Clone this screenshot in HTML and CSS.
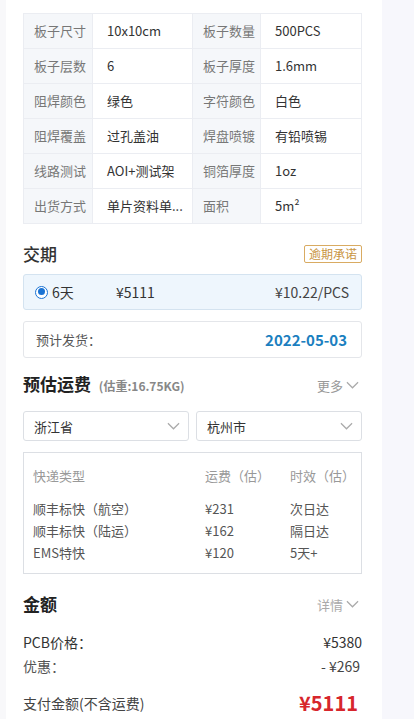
FILE: index.html
```html
<!DOCTYPE html>
<html lang="zh-CN">
<head>
<meta charset="utf-8">
<title>PCB 订单</title>
<link rel="stylesheet" href="styles.css">
</head>
<body>
<div class="page">
  <div class="strip"></div>
  <main class="panel">
    <table class="spec">
      <tr><td class="k">板子尺寸</td><td class="v">10x10cm</td><td class="k">板子数量</td><td class="v">500PCS</td></tr>
      <tr><td class="k">板子层数</td><td class="v">6</td><td class="k">板子厚度</td><td class="v">1.6mm</td></tr>
      <tr><td class="k">阻焊颜色</td><td class="v">绿色</td><td class="k">字符颜色</td><td class="v">白色</td></tr>
      <tr><td class="k">阻焊覆盖</td><td class="v">过孔盖油</td><td class="k">焊盘喷镀</td><td class="v">有铅喷锡</td></tr>
      <tr><td class="k">线路测试</td><td class="v">AOI+测试架</td><td class="k">铜箔厚度</td><td class="v">1oz</td></tr>
      <tr><td class="k">出货方式</td><td class="v">单片资料单...</td><td class="k">面积</td><td class="v">5m²</td></tr>
    </table>

    <div class="title-row t1">
      <h2 class="title light">交期</h2>
      <span class="badge">逾期承诺</span>
    </div>
    <div class="option">
      <span class="radio"></span>
      <span class="days">6天</span>
      <span class="price">¥5111</span>
      <span class="unit">¥10.22/PCS</span>
    </div>
    <div class="ship-date">
      <span class="sd-label">预计发货：</span>
      <span class="sd-value">2022-05-03</span>
    </div>

    <div class="title-row t2">
      <h2 class="title">预估运费 <small>(估重:16.75KG)</small></h2>
      <span class="more">更多 <svg class="chev" viewBox="0 0 14 8"><path d="M1 1l6 6 6-6"/></svg></span>
    </div>
    <div class="selects">
      <div class="select"><span>浙江省</span><svg class="chev" viewBox="0 0 14 8"><path d="M1 1l6 6 6-6"/></svg></div>
      <div class="select"><span>杭州市</span><svg class="chev" viewBox="0 0 14 8"><path d="M1 1l6 6 6-6"/></svg></div>
    </div>
    <div class="express">
      <div class="ex-row head"><span>快递类型</span><span>运费（估）</span><span>时效（估）</span></div>
      <div class="ex-body">
        <div class="ex-row"><span>顺丰标快（航空）</span><span>¥231</span><span>次日达</span></div>
        <div class="ex-row"><span>顺丰标快（陆运）</span><span>¥162</span><span>隔日达</span></div>
        <div class="ex-row"><span>EMS特快</span><span>¥120</span><span>5天+</span></div>
      </div>
    </div>

    <div class="title-row t3">
      <h2 class="title">金额</h2>
      <span class="more detail">详情 <svg class="chev" viewBox="0 0 14 8"><path d="M1 1l6 6 6-6"/></svg></span>
    </div>
    <div class="amounts">
      <div class="amt"><span class="ak">PCB价格：</span><span>¥5380</span></div>
      <div class="amt"><span class="ak disc">优惠：</span><span class="discv">- ¥269</span></div>
    </div>
    <div class="total">
      <span>支付金额(不含运费)</span>
      <span class="total-v">¥5111</span>
    </div>
  </main>
  <div class="side"></div>
</div>
</body>
</html>
```

FILE: styles.css
```css
* { box-sizing: border-box; }
html, body { margin: 0; padding: 0; }
body {
  font-family: "Noto Sans CJK SC", "Noto Sans", "Liberation Sans", sans-serif;
  color: #333;
  background: #f7f7fc;
  font-size: 13px;
}
.page { display: flex; min-height: 719px; }
.strip { width: 6px; background: #f8f8fa; flex: none; }
.panel {
  width: 376px;
  flex: none;
  background: #fff;
  padding: 13px 20px 0 17px;
}
.side { flex: 1; background: #f7f7fc; }

.spec {
  width: 339px;
  border-collapse: collapse;
  table-layout: fixed;
}
.spec td {
  height: 35px;
  border: 1px solid #ebedf2;
  padding: 0 0 0 10px;
  font-size: 13px;
  line-height: 18px;
  white-space: nowrap;
  overflow: hidden;
}
.spec td:nth-child(1) { width: 69px; }
.spec td:nth-child(2) { width: 100px; }
.spec td:nth-child(3) { width: 68px; }
.spec .k { background: #f5f7fa; color: #777; }
.spec .v { color: #333; padding-left: 14px; }

.title-row {
  display: flex;
  align-items: center;
  justify-content: space-between;
  height: 20px;
}
.title {
  margin: 0;
  font-size: 17px;
  line-height: 20px;
  font-weight: 700;
  color: #222;
}
.title.light { font-weight: 500; color: #333; }
.title small { font-size: 12px; color: #888; font-weight: 700; margin-left: 4px; }
.t1 { margin-top: 20px; }
.badge {
  font-size: 12px;
  line-height: 16px;
  color: #c9953f;
  border: 1px solid #d9ab62;
  border-radius: 2px;
  padding: 0 4px;
}

.option {
  margin-top: 10px;
  height: 36px;
  display: flex;
  align-items: center;
  background: #eef6fd;
  border: 1px solid #d4e3f0;
  border-radius: 3px;
  padding: 0 12px 0 11px;
  font-size: 14px;
  color: #333;
}
.radio {
  width: 13px; height: 13px;
  border-radius: 50%;
  border: 1.5px solid #1a73d4;
  background: #fff;
  position: relative;
  flex: none;
}
.radio::after {
  content: "";
  position: absolute;
  left: 1.5px; top: 1.5px;
  width: 7px; height: 7px;
  border-radius: 50%;
  background: #1a73d4;
}
.days { margin-left: 4px; width: 64px; }
.price { flex: 1; }
.unit { color: #444; }

.ship-date {
  margin-top: 11px;
  height: 37px;
  display: flex;
  align-items: center;
  justify-content: space-between;
  border: 1px solid #e4e6ea;
  border-radius: 3px;
  padding: 0 14px 0 12px;
}
.sd-label { color: #555; font-size: 13px; }
.sd-value { color: #1b7fc0; font-weight: 700; font-size: 15px; }

.t2 { margin-top: 17px; }
.more {
  display: flex;
  align-items: center;
  gap: 3px;
  font-size: 13px;
  color: #999;
  padding-right: 3px;
}
.chev {
  width: 13px; height: 8px;
  fill: none;
  stroke: #aaa;
  stroke-width: 1.3;
}

.selects {
  margin-top: 16px;
  display: grid;
  grid-template-columns: 166px 166px;
  column-gap: 7px;
}
.select {
  height: 30px;
  display: flex;
  align-items: center;
  justify-content: space-between;
  border: 1px solid #dcdfe4;
  border-radius: 3px;
  padding: 0 8px 0 10px;
  font-size: 13px;
  color: #333;
}

.express {
  margin-top: 11px;
  height: 122px;
  border: 1px solid #dcdfe4;
  padding: 13px 0 0 9px;
}
.ex-row {
  display: grid;
  grid-template-columns: 172px 85px 1fr;
  line-height: 22px;
  font-size: 13px;
  color: #555;
}
.ex-row.head { color: #999; line-height: 20px; }
.ex-body { margin-top: 12px; }

.t3 { margin-top: 20px; }
.detail { color: #aaa; }

.amounts { margin-top: 16px; }
.amt {
  display: flex;
  justify-content: space-between;
  line-height: 24px;
  font-size: 14px;
  color: #333;
}
.ak { color: #333; }
.ak.disc { color: #555; }
.discv { padding-right: 2px; color: #444; }

.total {
  margin-top: 12px;
  height: 26px;
  display: flex;
  align-items: center;
  justify-content: space-between;
  font-size: 14px;
  line-height: 20px;
  color: #444;
}
.total-v {
  color: #d7262c;
  font-weight: 700;
  font-size: 20px;
  line-height: 24px;
  padding-right: 4px;
}
```
